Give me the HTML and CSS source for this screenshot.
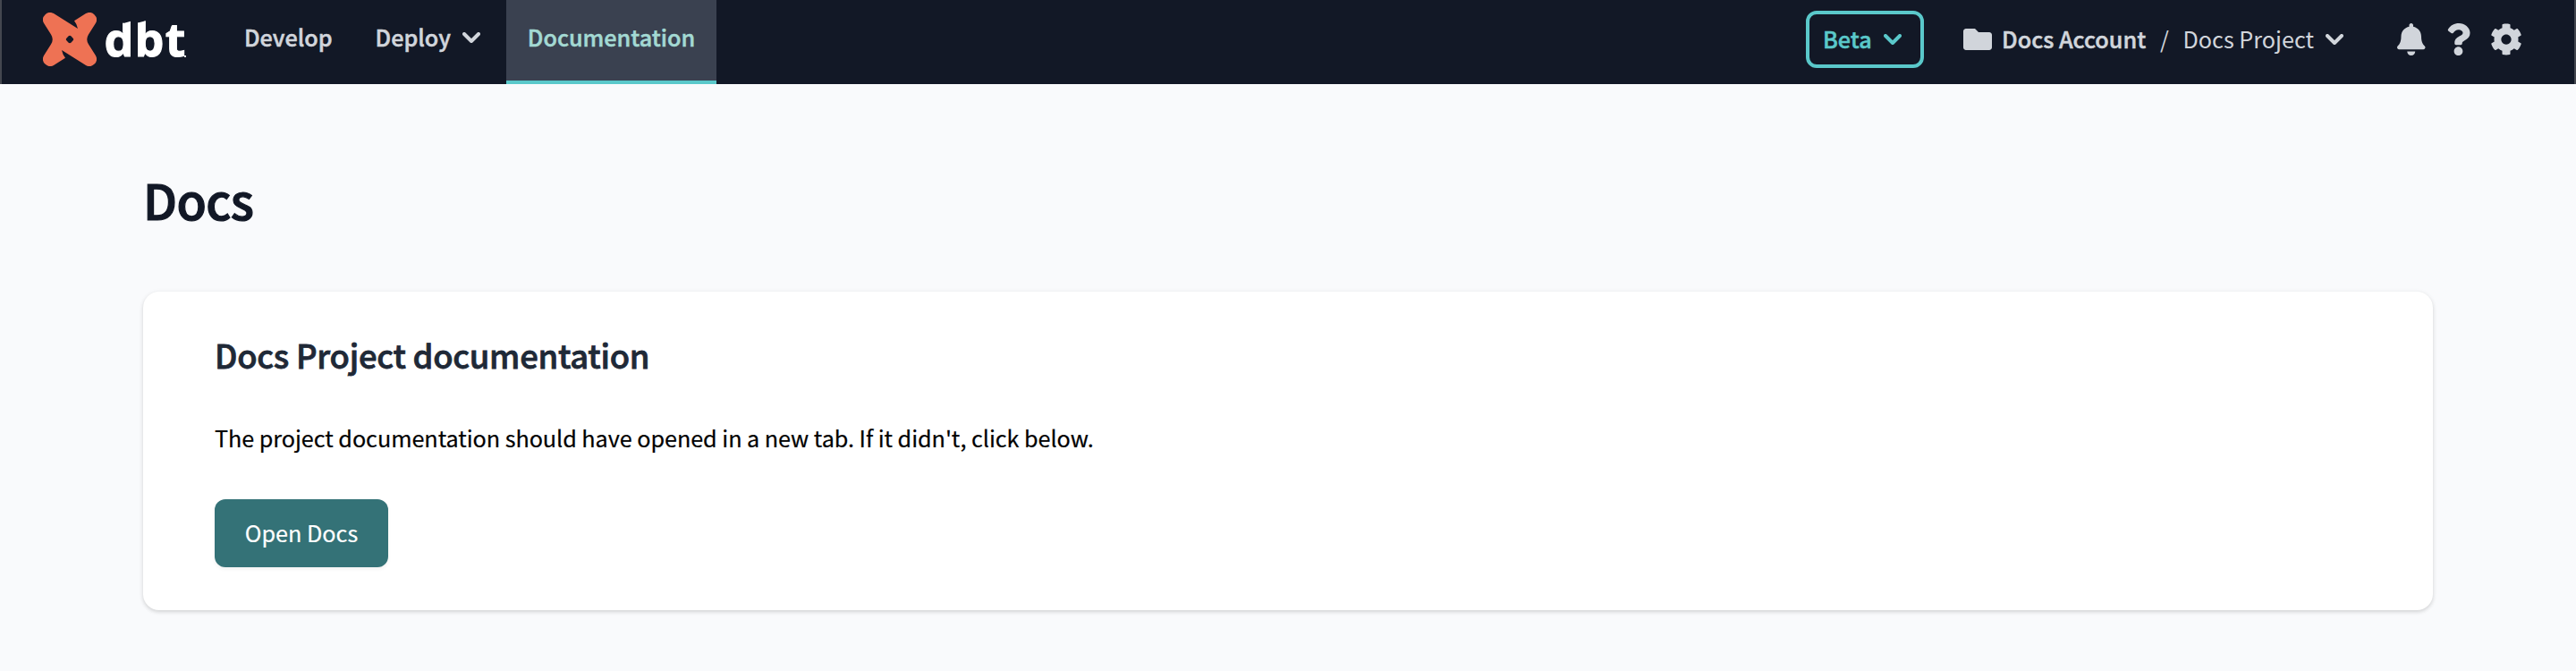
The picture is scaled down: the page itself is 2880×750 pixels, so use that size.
FILE: index.html
```html
<!DOCTYPE html>
<html lang="en">
<head>
<meta charset="utf-8">
<title>Docs</title>
<link rel="stylesheet" href="styles.css">
</head>
<body>
<header class="topbar">
  <a class="logo">
    <svg class="logo-mark" viewBox="0 0 60 60"><path fill="#ee7254" fill-rule="evenodd" d="M12 1.100 L39 18 Q38 13 35 9.300 L48 1.100 A8 8 0 0 1 58.900 12 L51 24.500 Q47.500 30 51 35.500 L58.900 48 A8 8 0 0 1 48 58.900 L21 42 Q22 47 25 50.700 L12 58.900 A8 8 0 0 1 1.100 48 L9 35.500 Q12.500 30 9 24.500 L1.100 12 A8 8 0 0 1 12 1.100 Z M28.400 26.600 L26.600 28.400 Q25 30 26.600 31.600 L28.400 33.400 Q30 35 31.600 33.400 L33.400 31.600 Q35 30 33.400 28.400 L31.600 26.600 Q30 25 28.400 26.600 Z"/></svg>
    <span class="logo-word">dbt</span><span class="logo-dot"></span>
  </a>
  <nav class="nav">
    <a class="nav-link">Develop</a>
    <a class="nav-link menu">Deploy<svg class="chevron" viewBox="0 0 20 12"><path d="M2 2l8 8 8-8"/></svg></a>
    <a class="nav-link active">Documentation</a>
  </nav>
  <div class="tools">
    <button class="beta"><span class="label">Beta</span><svg class="chevron" viewBox="0 0 20 12"><path d="M2 2l8 8 8-8"/></svg></button>
    <div class="crumbs">
      <svg class="folder" viewBox="0 64 512 384"><path d="M464 128H272l-64-64H48C21.500 64 0 85.500 0 112v288c0 26.500 21.500 48 48 48h416c26.500 0 48-21.500 48-48V176c0-26.500-21.500-48-48-48z"/></svg>
      <span class="label account">Docs Account</span><span class="label slash">/</span><span class="label">Docs Project</span><svg class="chevron" viewBox="0 0 20 12"><path d="M2 2l8 8 8-8"/></svg>
    </div>
    <svg class="icon bell" viewBox="0 0 448 512"><path d="M224 512c35.320 0 63.970-28.650 63.970-64H160.030c0 35.350 28.650 64 63.970 64zm215.390-149.710c-19.320-20.760-55.470-51.990-55.470-154.290 0-77.700-54.480-139.900-127.940-155.160V32c0-17.670-14.320-32-31.980-32s-31.980 14.330-31.980 32v20.840C118.560 68.100 64.080 130.300 64.080 208c0 102.300-36.150 133.530-55.470 154.290-6 6.450-8.660 14.160-8.610 21.710.11 16.400 12.980 32 32.100 32h383.800c19.120 0 32-15.600 32.100-32 .05-7.550-2.610-15.270-8.610-21.710z"/></svg>
    <svg class="icon help" viewBox="0 0 384 512"><path d="M202.021 0C122.202 0 70.503 32.703 29.914 91.026c-7.363 10.580-5.093 25.086 5.178 32.874l43.138 32.709c10.373 7.865 25.132 6.026 33.253-4.148 25.049-31.381 43.630-49.449 82.757-49.449 30.764 0 68.816 19.799 68.816 49.631 0 22.552-18.617 34.134-48.993 51.164-35.423 19.860-82.299 44.576-82.299 106.405V320c0 13.255 10.745 24 24 24h72.471c13.255 0 24-10.745 24-24v-5.773c0-42.860 125.268-44.645 125.268-160.627C377.504 66.256 286.902 0 202.021 0zM192 373.459c-38.196 0-69.271 31.075-69.271 69.271 0 38.195 31.075 69.270 69.271 69.270s69.271-31.075 69.271-69.271-31.075-69.270-69.271-69.270z"/></svg>
    <svg class="icon gear" viewBox="0 0 512 512"><path d="M487.400 315.700l-42.600-24.600c4.300-23.200 4.300-47 0-70.200l42.600-24.600c4.900-2.800 7.100-8.600 5.500-14-11.100-35.600-30-67.800-54.700-94.600-3.800-4.100-10-5.100-14.800-2.300L380.800 110c-17.900-15.400-38.500-27.300-60.800-35.100V25.800c0-5.600-3.900-10.500-9.400-11.700-36.700-8.200-74.300-7.800-109.200 0-5.500 1.200-9.400 6.100-9.400 11.700V75c-22.200 7.900-42.800 19.800-60.800 35.100L88.700 85.500c-4.900-2.800-11-1.900-14.800 2.300-24.700 26.700-43.600 58.900-54.700 94.600-1.700 5.400.6 11.200 5.500 14L67.300 221c-4.300 23.200-4.300 47 0 70.200l-42.600 24.600c-4.900 2.800-7.100 8.600-5.500 14 11.100 35.600 30 67.800 54.700 94.600 3.800 4.100 10 5.100 14.800 2.300l42.600-24.600c17.900 15.400 38.500 27.300 60.800 35.100v49.200c0 5.600 3.900 10.500 9.400 11.700 36.700 8.200 74.300 7.800 109.200 0 5.500-1.200 9.400-6.100 9.400-11.700v-49.200c22.200-7.900 42.800-19.800 60.800-35.100l42.600 24.600c4.900 2.800 11 1.900 14.800-2.300 24.700-26.700 43.600-58.900 54.700-94.600 1.500-5.500-.7-11.300-5.600-14.100zM256 336c-44.100 0-80-35.900-80-80s35.900-80 80-80 80 35.900 80 80-35.900 80-80 80z"/></svg>
  </div>
</header>
<main class="page">
  <h1 class="title">Docs</h1>
  <section class="card">
    <h2 class="card-title">Docs Project documentation</h2>
    <p class="card-text">The project documentation should have opened in a new tab. If it didn't, click below.</p>
    <button class="primary">Open Docs</button>
  </section>
</main>
</body>
</html>
```
FILE: styles.css
```css
* { box-sizing: border-box; }
body {
  margin: 0;
  height: 750px;
  background: #f9fafc;
  font-family: "Noto Sans CJK SC", "Noto Sans", sans-serif;
  font-size: 25.2px;
}
h1, h2, p { margin: 0; }
button { font: inherit; }
.topbar {
  display: flex;
  height: 94px;
  background: #121826;
  border-left: 2px solid #44474f;
  border-right: 2px solid #44474f;
  color: #d1d5db;
  line-height: 36px;
}
.logo { display: flex; width: 247px; padding: 14px 0 0 46px; }
.logo-mark { width: 60px; height: 60px; }
.logo-word {
  width: 95px;
  height: 60px;
  margin: -1px 0 0 8.500px;
  font: 700 52px/60px "Open Sans", sans-serif;
  letter-spacing: 1.200px;
  -webkit-text-stroke: 1px currentColor;
  color: #fff;
  /* slanted tops on the ascenders */
  clip-path: polygon(0 12.700px, 22.500px 12.700px, 31.500px 10.300px, 34.500px 10.300px, 34.500px 13.200px, 46.500px 10.300px, 60px 10.300px, 69px 17.500px, 79px 14.300px, 95px 14.300px, 95px 60px, 0 60px);
}
.logo-dot { width: 2px; height: 2px; margin: 48px 0 0 -5.500px; background: #fff; }
.nav { display: flex; font-weight: 500; -webkit-text-stroke: 0.5px currentColor; }
.nav-link { display: flex; align-items: center; padding: 0 24px 12px; }
.nav-link.menu { padding-right: 29px; }
.nav-link.menu .chevron { margin: 2px 0 0 13px; }
.nav-link.active {
  padding-bottom: 8px;
  background: #3a4150;
  border-bottom: 4px solid #5ac8ca;
  color: #a3d9d3;
}
.chevron {
  width: 20px;
  height: 12px;
  fill: none;
  stroke: currentColor;
  stroke-width: 4;
  stroke-linecap: round;
  stroke-linejoin: round;
}
.tools { display: flex; align-items: center; height: 88px; margin-left: auto; padding-right: 58.500px; }
.label { margin-top: -2px; }
.beta {
  display: flex;
  align-items: center;
  justify-content: space-between;
  width: 132px;
  height: 64px;
  margin-right: 44px;
  padding: 0 21px 0 15px;
  border: 4px solid #5ac8ca;
  border-radius: 12px;
  background: none;
  color: #5ac8ca;
  font-weight: 500;
  -webkit-text-stroke: 0.5px currentColor;
}
.crumbs { display: flex; align-items: center; }
.crumbs .chevron { margin-left: 13px; }
.folder { width: 32px; height: 24px; margin-right: 11px; fill: currentColor; }
.account { font-weight: 500; -webkit-text-stroke: 0.5px currentColor; }
.slash { margin: -2px 15.500px 0 16px; }
.icon { height: 36px; fill: currentColor; }
.bell { margin-left: 60px; }
.help { margin-left: 23.500px; }
.gear { margin-left: 21.500px; }
.page { padding: 96px 160px 0; }
.title {
  font-size: 54.400px;
  line-height: 66px;
  letter-spacing: -0.600px;
  color: #121826;
  font-weight: 500;
  -webkit-text-stroke: 1.200px currentColor;
}
.card {
  height: 356px;
  margin-top: 70px;
  padding: 46px 80px;
  background: #fff;
  border-radius: 18px;
  box-shadow: 0 2px 4px rgba(0, 0, 0, .12), 0 1px 6px rgba(0, 0, 0, .06);
}
.card-title {
  font-size: 36.400px;
  line-height: 48px;
  letter-spacing: -0.260px;
  color: #1f2937;
  font-weight: 500;
  -webkit-text-stroke: 0.800px currentColor;
}
.card-text { margin: 49px 0; line-height: 40px; letter-spacing: -0.050px; color: #000; -webkit-text-stroke: 0.2px currentColor; }
.primary {
  display: block;
  width: 194px;
  height: 76px;
  padding: 0 0 2px;
  border: 0;
  border-radius: 12px;
  background: #347277;
  color: #fff;
  -webkit-text-stroke: 0.2px currentColor;
  box-shadow: 0 2px 4px rgba(0, 0, 0, .06);
}
```
